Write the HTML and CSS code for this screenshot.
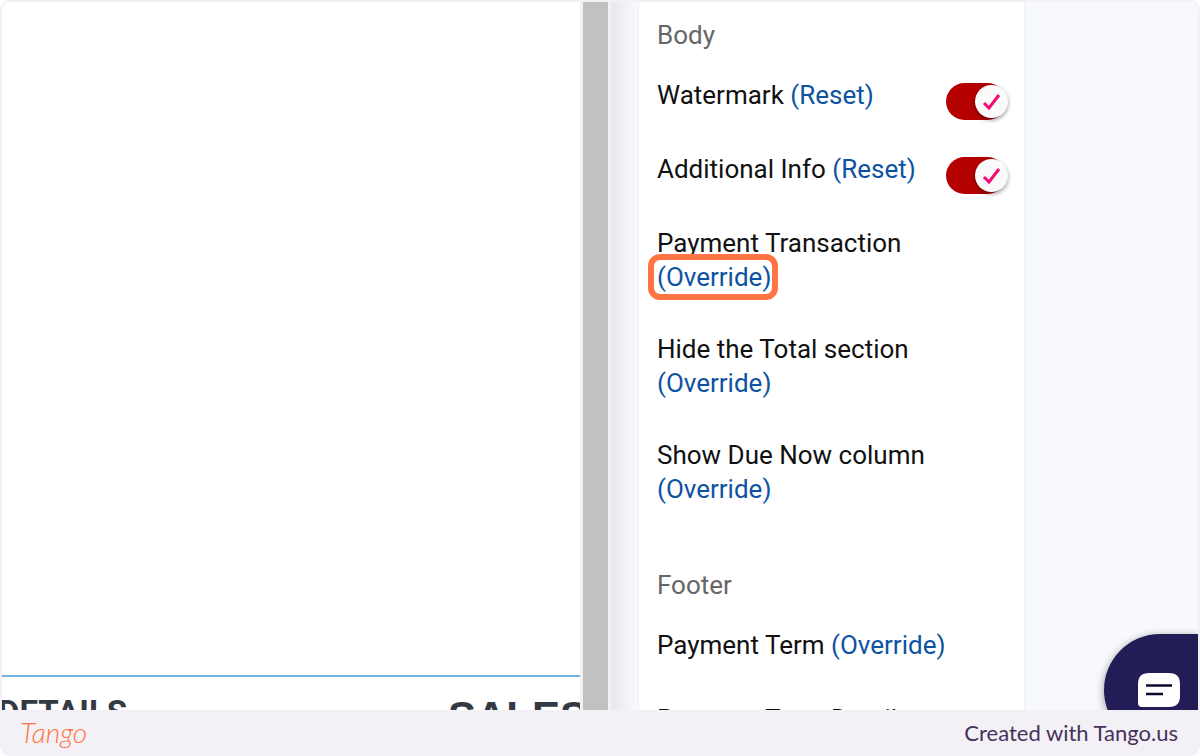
FILE: index.html
```html
<!DOCTYPE html>
<html lang="en">
<head>
<meta charset="utf-8">
<meta name="viewport" content="width=device-width, initial-scale=1">
<title>Payment Transaction</title>
<link rel="stylesheet" href="styles.css">
</head>
<body>
<div class="frame">
  <main class="stage">
    <section class="preview">
      <div class="preview-heads">
        <h2 class="details">DETAILS</h2>
        <h2 class="sales">SALES</h2>
      </div>
    </section>
    <div class="scrollbar"></div>
    <section class="workspace">
      <div class="panel">
        <h3 class="group">Body</h3>
        <div class="rows">
          <div class="row">
            <p class="name"><label for="watermark">Watermark</label> <a href="#">(Reset)</a></p>
            <span class="toggle">
              <input type="checkbox" id="watermark" checked>
              <svg class="tick" viewBox="0 0 20 20" aria-hidden="true"><path d="M2 11l5 5 10-13"/></svg>
            </span>
          </div>
          <div class="row">
            <p class="name"><label for="info">Additional Info</label> <a href="#">(Reset)</a></p>
            <span class="toggle">
              <input type="checkbox" id="info" checked>
              <svg class="tick" viewBox="0 0 20 20" aria-hidden="true"><path d="M2 11l5 5 10-13"/></svg>
            </span>
          </div>
          <p class="name stacked">Payment Transaction <a class="marked" href="#">(Override)</a></p>
          <p class="name stacked">Hide the Total section <a href="#">(Override)</a></p>
          <p class="name stacked">Show Due Now column <a href="#">(Override)</a></p>
        </div>
        <h3 class="group footer-group">Footer</h3>
        <div class="rows">
          <p class="name">Payment Term <a href="#">(Override)</a></p>
          <p class="name">Payment Term Detail</p>
        </div>
      </div>
      <button class="chat" type="button" aria-label="Open chat">
        <svg class="chat-icon" viewBox="0 0 42 34" aria-hidden="true">
          <path class="bubble" d="M11 0H31Q42 0 42 11V23Q42 34 31 34H4Q0 34 0 30V11Q0 0 11 0Z"/>
          <path class="lines" d="M8 12.5H34M8 21H25"/>
        </svg>
      </button>
    </section>
  </main>
  <footer class="credit">
    <a class="logo" href="#">Tango</a>
    <span class="made">Created with Tango.us</span>
  </footer>
</div>
</body>
</html>
```
FILE: styles.css
```css
* { box-sizing: border-box; }

body {
  margin: 0;
  background: #fff;
  font-family: Roboto, "Liberation Sans", sans-serif;
}

.frame {
  display: flex;
  flex-direction: column;
  height: 100vh;
  padding: 2px 2px 0;
  background: #f3f1f6;
  border-radius: 10px;
  overflow: hidden;
}

.stage {
  flex: 1;
  min-height: 0;
  display: grid;
  grid-template-columns: 578fr 31px 587fr;
  background: #fff;
  border-radius: 8px 8px 0 0;
  overflow: hidden;
}

.preview {
  display: flex;
  flex-direction: column;
  justify-content: flex-end;
  min-width: 0;
  overflow: hidden;
}

.preview-heads {
  display: flex;
  justify-content: space-between;
  height: 35px;
  padding-top: 16px;
  border-top: 2px solid #72b3e0;
}

.preview h2 { margin: 0; color: #343a44; font-weight: 700; }
.preview .details { margin-left: -4px; font-size: 33px; line-height: 40px; }
.preview .sales {
  margin-right: -8px;
  font-family: "Liberation Sans", sans-serif;
  font-size: 42px;
  line-height: 48px;
}

.scrollbar {
  background: #c1c1c1;
  border: solid #f1f1f1;
  border-width: 0 3px;
}

.workspace {
  position: relative;
  min-width: 0;
  overflow: hidden;
  padding: 0 174px 0 28px;
  background: linear-gradient(90deg, #e5e7eb, #f3f5fa 18px, #f7f9fd 28px);
}

.panel {
  height: 100%;
  padding: 16px 16px 0 18px;
  background: #fff;
  box-shadow: 0 0 2px #e4e6ea;
  overflow: hidden;
  font-size: 26px;
  line-height: 34px;
  color: #111;
}

.group { margin: 0 0 26px; font-size: 26px; font-weight: 400; color: #666; }
.footer-group { margin-top: 62px; }
.rows { display: flex; flex-direction: column; gap: 38px; }
.row + .row, .row + .stacked, .name + .name:not(.stacked) { margin-top: 2px; }
.row { display: flex; justify-content: space-between; height: 34px; }
.name { margin: 0; white-space: nowrap; }
.name a { color: #0d53a1; text-decoration: none; }
.stacked a { display: block; width: max-content; }

.marked { position: relative; }
.marked::after {
  content: "";
  position: absolute;
  inset: -6px -7px -6px -9px;
  border: 6px solid #ff7442;
  border-radius: 12px;
}

.toggle { position: relative; flex: none; width: 62px; height: 37px; margin-top: 5px; }
.toggle input {
  appearance: none;
  display: block;
  width: 60px;
  height: 37px;
  margin: 0;
  border-radius: 19px;
  background: #b50000;
}
.toggle input::after {
  content: "";
  position: absolute;
  top: 2px;
  right: 0;
  width: 33px;
  height: 33px;
  border-radius: 50%;
  background: #fafafa;
  box-shadow: 0 2px 4px #0006;
}
.tick {
  position: absolute;
  top: 9px;
  right: 6px;
  width: 20px;
  height: 20px;
  pointer-events: none;
  fill: none;
  stroke: #f50a76;
  stroke-width: 3;
}

.chat {
  position: absolute;
  right: 0;
  bottom: -36px;
  display: flex;
  align-items: flex-start;
  width: 94px;
  height: 112px;
  padding: 39px 18px 0 34px;
  border: 0;
  border-radius: 56px 0 0 56px;
  background: #231d57;
  box-shadow: 0 2px 8px #0006;
}
.chat-icon { display: block; flex: none; width: 42px; height: 34px; }
.bubble { fill: #fff; }
.lines { fill: none; stroke: #0d0b2c; stroke-width: 2.5; }

.credit {
  display: flex;
  align-items: center;
  justify-content: space-between;
  height: 46px;
  padding: 0 20px 2px 18px;
  font-family: Lato, sans-serif;
  color: #45325a;
}
.logo {
  color: #ff7442;
  font-size: 28px;
  font-style: italic;
  font-weight: 300;
  text-decoration: none;
}
.made { font-size: 22px; }
```
